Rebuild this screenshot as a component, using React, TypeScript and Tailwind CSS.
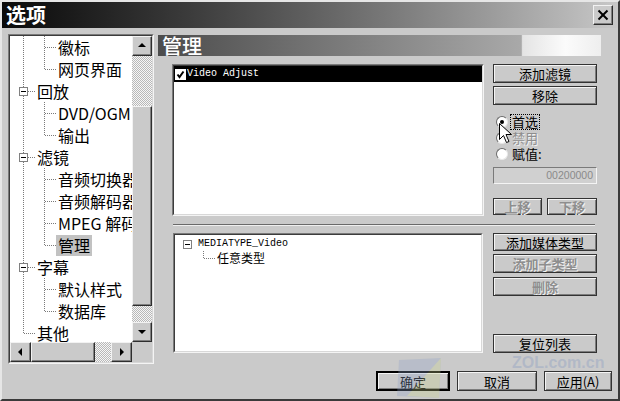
import React from "react";

type Row = { label: string; kind: "child" | "parent" | "leaf"; last?: boolean; selected?: boolean };

const rows: Row[] = [
  { label: "徽标", kind: "child" },
  { label: "网页界面", kind: "child", last: true },
  { label: "回放", kind: "parent" },
  { label: "DVD/OGM", kind: "child" },
  { label: "输出", kind: "child", last: true },
  { label: "滤镜", kind: "parent" },
  { label: "音频切换器", kind: "child" },
  { label: "音频解码器", kind: "child" },
  { label: "MPEG 解码器", kind: "child" },
  { label: "管理", kind: "child", last: true, selected: true },
  { label: "字幕", kind: "parent" },
  { label: "默认样式", kind: "child" },
  { label: "数据库", kind: "child", last: true },
  { label: "其他", kind: "leaf" },
];

const face = "bg-[#cacaca]";
const raised =
  "border border-t-[#f2f2f2] border-l-[#f2f2f2] border-r-[#2e2e2e] border-b-[#2e2e2e] shadow-[inset_-1px_-1px_0_#808080]";
const sunken =
  "border border-t-[#7a7a7a] border-l-[#7a7a7a] border-r-[#f4f4f4] border-b-[#f4f4f4]";
const btn =
  "flex items-center justify-center bg-[#cacaca] border border-[#333] shadow-[inset_1px_1px_0_#f4f4f4,inset_-1px_-1px_0_#7c7c7c] text-[13px] leading-none";
const btnOn = "text-black";
const btnOff = "text-[#8e8e8e] [text-shadow:1px_1px_0_#f2f2f2] font-bold";
const checker =
  "bg-[conic-gradient(#f6f6f6_25%,#b8b8b8_0_50%,#f6f6f6_0_75%,#b8b8b8_0)] bg-size-[2px_2px]";

function Lines({ row }: { row: Row }) {
  const d = { stroke: "#7a7a7a", strokeDasharray: "1 1", strokeWidth: 1 };
  if (row.kind === "child") {
    return (
      <svg width="46" height="22" className="shrink-0">
        <line x1="13.5" y1="0" x2="13.5" y2="22" {...d} />
        <line x1="34.5" y1="0" x2="34.5" y2={row.last ? 11 : 22} {...d} />
        <line x1="35" y1="11.5" x2="46" y2="11.5" {...d} />
      </svg>
    );
  }
  if (row.kind === "parent") {
    return (
      <svg width="25" height="22" className="shrink-0">
        <line x1="13.5" y1="0" x2="13.5" y2="7" {...d} />
        <line x1="13.5" y1="16" x2="13.5" y2="22" {...d} />
        <rect x="9.5" y="7.5" width="8" height="8" fill="#fff" stroke="#808080" />
        <line x1="11" y1="11.5" x2="16" y2="11.5" stroke="#000" />
        <line x1="18" y1="11.5" x2="25" y2="11.5" {...d} />
      </svg>
    );
  }
  return (
    <svg width="25" height="22" className="shrink-0">
      <line x1="13.5" y1="0" x2="13.5" y2="11" {...d} />
      <line x1="14" y1="11.5" x2="25" y2="11.5" {...d} />
    </svg>
  );
}

function Arrow({ dir }: { dir: "up" | "down" | "left" | "right" }) {
  const pts = {
    up: "2,7 6,3 10,7",
    down: "2,4 6,8 10,4",
    left: "7,2 3,6 7,10",
    right: "4,2 8,6 4,10",
  }[dir];
  return (
    <svg width="12" height="12">
      <polygon points={pts} fill="#000" />
    </svg>
  );
}

function ScrollBtn({ dir, cls }: { dir: "up" | "down" | "left" | "right"; cls: string }) {
  return <div className={`${cls} ${face} ${raised} flex items-center justify-center shrink-0`}><Arrow dir={dir} /></div>;
}

function Radio({ checked }: { checked?: boolean }) {
  return (
    <span className="w-[12px] h-[12px] rounded-full bg-white border border-t-[#6a6a6a] border-l-[#6a6a6a] border-r-[#e8e8e8] border-b-[#e8e8e8] flex items-center justify-center shrink-0">
      {checked && <span className="w-[4px] h-[4px] rounded-full bg-black" />}
    </span>
  );
}

export default function App() {
  return (
    <div className="relative w-[620px] h-[401px] overflow-hidden bg-[#cacaca] border-2 border-t-[#e6e6e6] border-l-[#e6e6e6] border-r-[#3a3a3a] border-b-[#3a3a3a] flex flex-col font-['Noto_Sans_CJK_SC','Liberation_Sans',sans-serif] text-black">
      {/* title bar */}
      <div className="h-[26px] shrink-0 flex items-center justify-between bg-linear-to-r from-[#0a0a0a] to-[#c8c8c8] pl-[4px] pr-[5px]">
        <span className="text-white text-[20px] font-bold leading-none">选项</span>
        <div className={`w-[20px] h-[20px] ${face} ${raised} flex items-center justify-center`}>
          <svg width="12" height="12">
            <line x1="1.5" y1="1.5" x2="10.5" y2="10.5" stroke="#000" strokeWidth="2" />
            <line x1="10.5" y1="1.5" x2="1.5" y2="10.5" stroke="#000" strokeWidth="2" />
          </svg>
        </div>
      </div>

      {/* main */}
      <div className="flex mt-[6px] ml-[6px] gap-[4px]">
        {/* tree */}
        <div className={`w-[146px] h-[330px] ${sunken}`}>
          <div className="w-full h-full border border-t-[#3c3c3c] border-l-[#3c3c3c] border-r-[#d8d8d8] border-b-[#d8d8d8] flex flex-col">
            <div className="flex h-[306px]">
              <div className="w-[122px] bg-white overflow-hidden flex flex-col">
                {rows.map((r) => (
                  <div key={r.label} className="h-[22px] flex items-center shrink-0 whitespace-nowrap">
                    <Lines row={r} />
                    <span
                      className={`px-[2px] text-[16px] leading-[21px] ${r.selected ? "bg-[#c2c2c2]" : ""}`}
                    >
                      {r.label}
                    </span>
                  </div>
                ))}
              </div>
              <div className="w-[20px] flex flex-col">
                <ScrollBtn dir="up" cls="h-[20px] w-[20px]" />
                <div className={`h-[50px] ${checker}`} />
                <div className={`h-[200px] ${face} ${raised}`} />
                <div className={`h-[16px] ${checker}`} />
                <ScrollBtn dir="down" cls="h-[20px] w-[20px]" />
              </div>
            </div>
            <div className="flex h-[20px]">
              <ScrollBtn dir="left" cls="w-[21px] h-[20px]" />
              <div className={`w-[64px] h-[20px] ${face} ${raised}`} />
              <div className={`w-[16px] h-[20px] ${checker}`} />
              <ScrollBtn dir="right" cls="w-[21px] h-[20px]" />
              <div className={`w-[20px] h-[20px] ${face}`} />
            </div>
          </div>
        </div>

        {/* right column */}
        <div className="w-[443px] flex flex-col">
          <div className="mt-[1px] h-[21px] flex items-center pl-[4px] bg-[linear-gradient(to_right,#4c4c4c_0%,#a9a9a9_82%,#e4e4e4_82.3%,#fbfbfb_92%,#eeeeee_100%)]">
            <span className="text-white text-[20px] leading-none font-medium">管理</span>
          </div>

          {/* filters */}
          <div className="flex mt-[8px] ml-[14px] gap-[9px]">
            <div className={`w-[312px] h-[152px] bg-white ${sunken}`}>
              <div className="w-full h-full border border-t-[#3c3c3c] border-l-[#3c3c3c] border-r-[#d8d8d8] border-b-[#d8d8d8]">
                <div className="h-[16px] bg-black flex items-center pl-[1px] gap-[1px]">
                  <span className="w-[11px] h-[11px] bg-white flex items-center justify-center">
                    <svg width="9" height="9">
                      <polyline points="1.5,4.5 3.5,7 7.5,1.5" fill="none" stroke="#000" strokeWidth="2" />
                    </svg>
                  </span>
                  <span className="text-white text-[10px] leading-none font-['Liberation_Mono',monospace]">Video Adjust</span>
                </div>
              </div>
            </div>
            <div className="w-[104px] flex flex-col">
              <div className={`${btn} ${btnOn} h-[19px]`}>添加滤镜</div>
              <div className={`${btn} ${btnOn} h-[19px] mt-[3px]`}>移除</div>
              <div className="relative mt-[9px] flex flex-col text-[13px] leading-[14px]">
                <div className="h-[16px] flex items-center gap-[3px] pl-[3px]">
                  <Radio checked />
                  <span className="outline-1 outline-dotted outline-black px-[1px]">首选</span>
                </div>
                <div className="h-[16px] flex items-center gap-[3px] pl-[3px]">
                  <Radio />
                  <span className="text-[#8e8e8e] [text-shadow:1px_1px_0_#f2f2f2] px-[1px]">禁用</span>
                </div>
                <div className="h-[16px] flex items-center gap-[3px] pl-[3px]">
                  <Radio />
                  <span className="px-[1px]">赋值:</span>
                </div>
                <svg width="13" height="21" className="absolute left-[6px] top-[9px]">
                  <polygon
                    points="0.5,0.5 0.5,16.5 4.5,12.5 7.5,19.5 10,18.5 7,11.5 12.5,11.5"
                    fill="#fff"
                    stroke="#000"
                    strokeWidth="1"
                  />
                </svg>
              </div>
              <div className={`mt-[5px] h-[17px] bg-[#d0d0d0] ${sunken} flex items-center justify-end pr-[3px]`}>
                <span className="text-[10.5px] leading-none text-[#8a8a8a] font-['Liberation_Sans',sans-serif]">00200000</span>
              </div>
              <div className="mt-[14px] flex justify-between">
                <div className={`${btn} ${btnOff} w-[49px] h-[17px]`}>上移</div>
                <div className={`${btn} ${btnOff} w-[50px] h-[17px]`}>下移</div>
              </div>
            </div>
          </div>

          {/* separator */}
          <div className="mt-[8px] ml-[15px] w-[422px] h-[2px] border-t border-t-[#6a6a6a] border-b border-b-[#efefef]" />

          {/* media types */}
          <div className="flex mt-[7px] ml-[15px] gap-[10px]">
            <div className={`w-[310px] h-[120px] bg-white ${sunken}`}>
              <div className="w-full h-full border border-t-[#3c3c3c] border-l-[#3c3c3c] border-r-[#d8d8d8] border-b-[#d8d8d8] pt-[2px]">
                <div className="h-[14px] flex items-center">
                  <svg width="23" height="14" className="shrink-0">
                    <rect x="8.5" y="3.5" width="8" height="8" fill="#fff" stroke="#808080" />
                    <line x1="10" y1="7.5" x2="15" y2="7.5" stroke="#000" />
                  </svg>
                  <span className="text-[10px] leading-none font-['Liberation_Mono',monospace]">MEDIATYPE_Video</span>
                </div>
                <div className="h-[14px] flex items-center">
                  <svg width="42" height="14" className="shrink-0">
                    <line x1="28.5" y1="0" x2="28.5" y2="7" stroke="#7a7a7a" strokeDasharray="1 1" />
                    <line x1="29" y1="7.5" x2="41" y2="7.5" stroke="#7a7a7a" strokeDasharray="1 1" />
                  </svg>
                  <span className="text-[12px] leading-none">任意类型</span>
                </div>
              </div>
            </div>
            <div className="w-[104px] h-[120px] flex flex-col">
              <div className={`${btn} ${btnOn} h-[18px]`}>添加媒体类型</div>
              <div className={`${btn} ${btnOff} h-[19px] mt-[3px]`}>添加子类型</div>
              <div className={`${btn} ${btnOff} h-[19px] mt-[4px]`}>删除</div>
              <div className={`${btn} ${btnOn} h-[19px] mt-auto`}>复位列表</div>
            </div>
          </div>
        </div>
      </div>

      {/* footer */}
      <div className="flex justify-end mt-[7px] pr-[6px] gap-[7px]">
        <div className={`${btn} ${btnOn} w-[74px] h-[20px] border-2 border-black`}>确定</div>
        <div className={`${btn} ${btnOn} w-[80px] h-[20px]`}>取消</div>
        <div className={`${btn} ${btnOn} w-[68px] h-[20px]`}>应用(A)</div>
      </div>

      {/* watermark */}
      <div className="absolute left-[393px] top-[354px] pointer-events-none opacity-30">
        <svg width="50" height="44">
          <polygon points="4,4 46,2 44,42 2,40" fill="#8fa2c8" />
          <polygon points="46,2 44,42 12,40" fill="#c7d28a" />
        </svg>
      </div>
      <div className="absolute left-[510px] top-[353px] pointer-events-none">
        <span className="block text-[16px] leading-[16px] font-bold text-[#aab4c6]/80 font-['Liberation_Sans',sans-serif]">ZOL.com.cn</span>
      </div>
    </div>
  );
}
